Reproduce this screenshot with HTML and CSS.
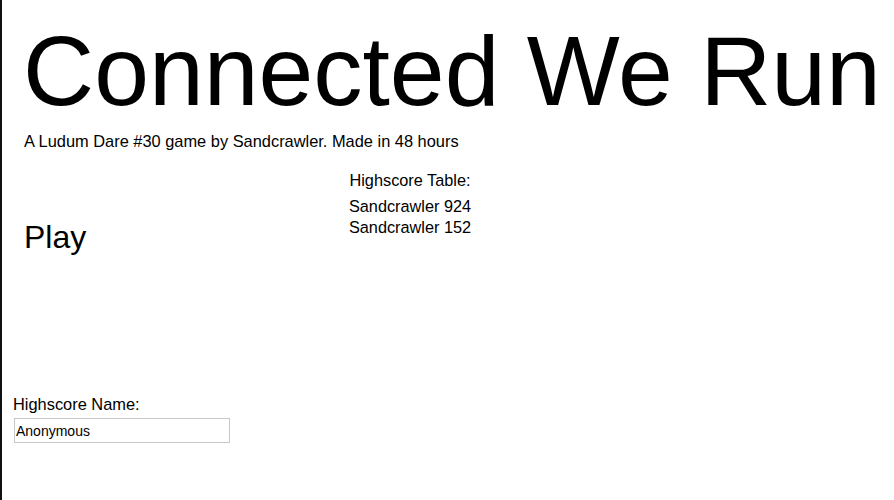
FILE: index.html
```
<!DOCTYPE html>
<html>
<head>
<meta charset="utf-8">
<title>Connected We Run</title>
<link rel="stylesheet" href="styles.css">
</head>
<body>
<div class="page">
  <h1 class="title">Connected We Run</h1>
  <p class="subtitle">A Ludum Dare #30 game by Sandcrawler. Made in 48 hours</p>
  <div class="row">
    <div class="play-col"><a class="play">Play</a></div>
    <div class="scores">
      <div class="scores-title">Highscore Table:</div>
      <ul class="score-list">
        <li>Sandcrawler 924</li>
        <li>Sandcrawler 152</li>
      </ul>
    </div>
  </div>
  <div class="name-box">
    <label class="name-label" for="name">Highscore Name:</label>
    <input class="name-input" id="name" type="text" value="Anonymous">
  </div>
</div>
</body>
</html>
```
FILE: styles.css
```
html, body {
  margin: 0;
  padding: 0;
  background: #fff;
}
body {
  border-left: 2px solid #111;
  height: 500px;
  box-sizing: border-box;
  font-family: "Liberation Sans", Arial, sans-serif;
  color: #000;
  overflow: hidden;
}
.page {
  padding-top: 22px;
}
.title {
  margin: 0 0 0 21px;
  font-size: 98.5px;
  font-weight: normal;
  line-height: 98px;
  white-space: nowrap;
}
.subtitle {
  margin: 12px 0 0 22px;
  font-size: 16.4px;
}
.row {
  display: flex;
  margin-top: 20px;
}
.play-col {
  flex: 0 0 308px;
  padding-top: 48px;
  padding-left: 22px;
  box-sizing: border-box;
}
.play {
  font-size: 32px;
  color: #000;
  text-decoration: none;
  cursor: pointer;
}
.scores {
  width: 200px;
  text-align: center;
  font-size: 16.3px;
}
.score-list {
  list-style: none;
  margin: 6px 0 0;
  padding: 0;
  line-height: 21px;
}
.name-box {
  margin-top: 139px;
  display: flex;
  flex-direction: column;
  align-items: flex-start;
}
.name-label {
  margin-left: 11px;
  font-size: 16.4px;
}
.name-input {
  margin: 4px 0 0 12px;
  width: 216px;
  height: 25px;
  box-sizing: border-box;
  border: 1px solid #c8c8c8;
  padding: 0 1px;
  font-family: "Liberation Sans", Arial, sans-serif;
  font-size: 14px;
  color: #000;
  outline: none;
}
```
